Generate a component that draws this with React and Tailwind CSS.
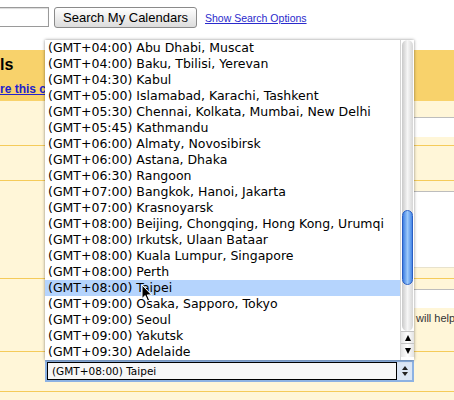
import React from 'react';

const zones = [
    '(GMT+04:00) Abu Dhabi, Muscat',
    '(GMT+04:00) Baku, Tbilisi, Yerevan',
    '(GMT+04:30) Kabul',
    '(GMT+05:00) Islamabad, Karachi, Tashkent',
    '(GMT+05:30) Chennai, Kolkata, Mumbai, New Delhi',
    '(GMT+05:45) Kathmandu',
    '(GMT+06:00) Almaty, Novosibirsk',
    '(GMT+06:00) Astana, Dhaka',
    '(GMT+06:30) Rangoon',
    '(GMT+07:00) Bangkok, Hanoi, Jakarta',
    '(GMT+07:00) Krasnoyarsk',
    '(GMT+08:00) Beijing, Chongqing, Hong Kong, Urumqi',
    '(GMT+08:00) Irkutsk, Ulaan Bataar',
    '(GMT+08:00) Kuala Lumpur, Singapore',
    '(GMT+08:00) Perth',
    '(GMT+08:00) Taipei',
    '(GMT+09:00) Osaka, Sapporo, Tokyo',
    '(GMT+09:00) Seoul',
    '(GMT+09:00) Yakutsk',
    '(GMT+09:30) Adelaide',
];

function Cursor() {
    return (
        <svg className="absolute left-[141px] top-[284px] w-[12px] h-[18px]" viewBox="0 0 12 18">
            <path d="M1 1 L1 14.5 L4.2 11.6 L6.6 17 L8.6 16.1 L6.3 10.9 L10.6 10.9 Z" fill="#000" stroke="#fff" strokeWidth="1" strokeLinejoin="round" />
        </svg>
    );
}

function Scrollbar() {
    return (
        <div className="w-[14px] h-full flex flex-col bg-white border-l border-[#d4d4d4]">
            {/* track */}
            <div className="flex-1 relative bg-gradient-to-r from-[#c9c9c9] via-[#f6f6f6] to-[#d6d6d6] rounded-t-[7px] rounded-b-[7px] mx-px">
                <div className="absolute left-0 right-0 top-[170px] h-[75px] rounded-full border border-[#2a5fc4] bg-gradient-to-r from-[#3d7ee2] via-[#9cc9fa] to-[#4787e6]" />
            </div>
            <div className="h-[13px] flex items-center justify-center border-t border-b border-[#c4c4c4] bg-gradient-to-r from-[#e4e4e4] via-white to-[#e4e4e4]">
                <div className="w-0 h-0 border-l-[3.5px] border-r-[3.5px] border-b-[6px] border-l-transparent border-r-transparent border-b-black" />
            </div>
            <div className="h-[13px] flex items-center justify-center bg-gradient-to-r from-[#e4e4e4] via-white to-[#e4e4e4]">
                <div className="w-0 h-0 border-l-[3.5px] border-r-[3.5px] border-t-[6px] border-l-transparent border-r-transparent border-t-black" />
            </div>
            <div className="h-[3px]" />
        </div>
    );
}

function ZoneSelect() {
    return (
        <div className="relative w-[369px] h-[22px] border-2 border-[#8db2e3] bg-[#dbe6f5] flex items-center">
            {/* open popup list */}
            <div className="absolute left-[-2px] bottom-[20px] w-[369px] h-[320px] bg-white flex shadow-[0_0_3px_rgba(0,0,0,0.45)]">
                <ul className="flex-1 overflow-hidden font-['DejaVu_Sans',sans-serif] text-[12.5px] text-black">
                    {zones.map((z, i) => (
                        <li
                            key={i}
                            className={`h-[16px] leading-[16px] pl-[3px] whitespace-nowrap ${i === 15 ? 'bg-[#b5d4fd]' : ''}`}
                        >
                            {z}
                        </li>
                    ))}
                </ul>
                <Scrollbar />
            </div>
            <div className="w-[350px] h-[18px] border border-black bg-[#f7f7f7] pl-[4px] font-['DejaVu_Sans',sans-serif] text-[10.5px] leading-[16px] text-black">
                (GMT+08:00) Taipei
            </div>
            <div className="flex-1 flex flex-col items-center justify-center gap-[2px]">
                <div className="w-0 h-0 border-l-[3.5px] border-r-[3.5px] border-b-[4px] border-l-transparent border-r-transparent border-b-[#222]" />
                <div className="w-0 h-0 border-l-[3.5px] border-r-[3.5px] border-t-[4px] border-l-transparent border-r-transparent border-t-[#222]" />
            </div>
        </div>
    );
}

export default function App() {
    return (
        <div className="relative w-[454px] h-[400px] overflow-hidden bg-white font-['Liberation_Sans',Arial,sans-serif]">
            {/* Search bar */}
            <div className="h-[50px] flex items-start pt-[7px]">
                <div className="ml-[-60px] w-[109px] h-[20px] border border-[#9a9a9a] bg-white shadow-[inset_0_1px_1px_rgba(0,0,0,0.15)]" />
                <button className="ml-[5px] h-[21px] w-[143px] rounded-[3px] border border-[#8a8a8a] bg-gradient-to-b from-white to-[#dcdcdc] text-[13px] text-black leading-none">
                    Search My Calendars
                </button>
                <a className="ml-[8px] mt-[6px] text-[10.5px] leading-none text-[#2a2acc] underline">Show Search Options</a>
            </div>

            {/* Header band */}
            <div className="h-[51px] bg-[#f8d26b] pt-[6px]">
                <div className="text-[16px] font-bold text-black leading-[18px]">ls</div>
                <a className="block mt-[8px] text-[12px] font-bold leading-[14px] text-[#2222cc] underline whitespace-nowrap">re this calendar</a>
            </div>

            {/* Details table */}
            <div className="bg-[#fff6d8]">
                {/* name */}
                <div className="h-[45px] pt-[16px] border-b border-[#f5cb5a] flex">
                    <div className="flex-1" />
                    <div className="w-[300px] h-[20px] bg-white border-t border-[#bdbdbd]" />
                </div>
                {/* owner */}
                <div className="h-[35px] border-b border-[#f5cb5a]" />
                {/* description */}
                <div className="h-[98px] pt-[10px] border-b border-[#f5cb5a] flex">
                    <div className="flex-1" />
                    <div className="w-[300px] h-[77px] bg-white border-t border-[#bdbdbd] border-b border-b-[#e8e2cc]" />
                </div>
                {/* location */}
                <div className="h-[73px] pt-[10px] border-b border-[#f5cb5a] overflow-hidden">
                    <div className="flex">
                        <div className="flex-1" />
                        <div className="w-[300px] h-[19px] bg-white border-t border-[#bdbdbd]" />
                    </div>
                    <p className="mt-[4px] pl-[416px] text-[11px] leading-[13px] text-[#333] whitespace-nowrap">
                        will help people find events on your calendar
                    </p>
                </div>
                {/* time zone */}
                <div className="h-[40px] pt-[8px] pl-[45px] border-b border-[#f5cb5a]">
                    <ZoneSelect />
                </div>
                <div className="h-[20px]" />
            </div>

            <Cursor />
        </div>
    );
}
